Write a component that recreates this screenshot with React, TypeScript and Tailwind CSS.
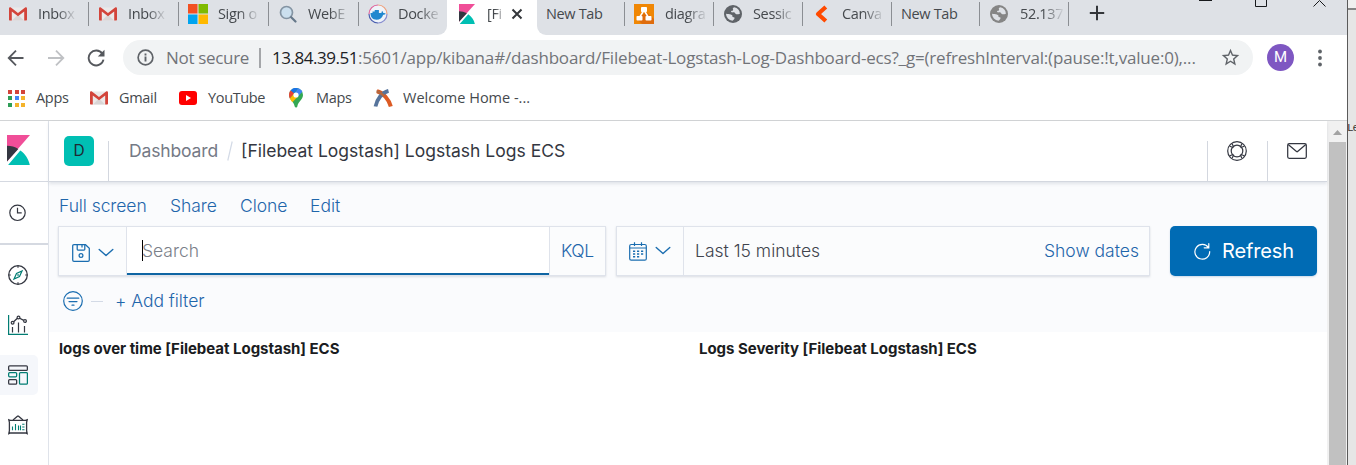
import React from "react";

type IconProps = { className?: string };

function GmailIcon({ className = "" }: IconProps) {
  return (
    <svg viewBox="0 0 18 14" className={`h-[14px] w-[18px] shrink-0 ${className}`}>
      <rect x="0.5" y="0.5" width="17" height="13" rx="1" fill="#ebe9e9" />
      <path d="M3 13.5 9 7.5l6 6z" fill="#d9d5d5" />
      <path d="M0 1.5C0 .5.8 0 1.6.2L9 6 16.4.2c.8-.2 1.6.3 1.6 1.3v11c0 .6-.4 1-1 1h-1.8V4.6L9 9.2 2.8 4.6v8.9H1c-.6 0-1-.4-1-1z" fill="#d3443a" />
    </svg>
  );
}

function MicrosoftIcon() {
  return (
    <svg viewBox="0 0 20 20" className="h-5 w-5 shrink-0">
      <path d="M0 0h9.5v9.5H0z" fill="#f25022" />
      <path d="M10.5 0H20v9.5h-9.5z" fill="#7fba00" />
      <path d="M0 10.5h9.5V20H0z" fill="#00a4ef" />
      <path d="M10.5 10.5H20V20h-9.5z" fill="#ffb900" />
    </svg>
  );
}

function SearchTabIcon() {
  return (
    <svg viewBox="0 0 18 18" className="h-[18px] w-[18px] shrink-0" fill="none">
      <circle cx="7.5" cy="7.500" r="6" fill="#cbdfee" stroke="#8494a3" strokeWidth="1.7" />
      <path d="m12.200 12.200 4.300 4.300" stroke="#66788a" strokeWidth="2.2" strokeLinecap="round" />
    </svg>
  );
}

function DockerIcon() {
  return (
    <svg viewBox="0 0 20 20" className="h-5 w-5 shrink-0" fill="none">
      <circle cx="10" cy="10" r="9" fill="#eef3f9" />
      <path d="M1 10a9 9 0 0 1 9-9" stroke="#e0609a" strokeWidth="1.2" />
      <path d="M10 1a9 9 0 0 1 9 9" stroke="#efa27e" strokeWidth="1.2" />
      <path d="M19 10a9 9 0 0 1-9 9" stroke="#8a8fd0" strokeWidth="1.2" />
      <path d="M10 19a9 9 0 0 1-9-9" stroke="#4a5fb0" strokeWidth="1.2" />
      <path d="M2.500 9h2V7.500h2.200V6h4.200v3h1.800c1 0 1.300-.8 1.100-2 1 .4 1.500 1.200 1.400 2 1-.2 2 0 2.500.4-.5 1-1.500 1.300-2.500 1.300-1.200 3.200-3.400 5-6.700 5C4.500 15.700 2.500 13 2.500 9z" fill="#2088cf" />
    </svg>
  );
}

function KibanaIcon({ className = "" }: IconProps) {
  return (
    <svg viewBox="0 0 23 30" preserveAspectRatio="none" className={`shrink-0 ${className}`}>
      <path d="M0 0h23L0 26.500z" fill="#f04e98" />
      <path d="M0 10.800c4.100 0 8 1.100 11.300 3.100L0 26.500z" fill="#343741" />
      <path d="M13.300 15.500 1.100 30H22.800c-1.200-6-4.600-11.100-9.500-14.500z" fill="#00bfb3" />
    </svg>
  );
}

function DiagramsIcon() {
  return (
    <svg viewBox="0 0 20 20" className="h-5 w-5 shrink-0">
      <rect width="20" height="20" fill="#f08705" />
      <path d="M12 8 20 15v5H8l-5-5z" fill="#df6c0c" />
      <path d="M9.500 7 5.800 13M10.500 7l3.700 6" stroke="#fff" strokeWidth="1.500" />
      <rect x="7" y="3" width="6" height="5" rx="0.800" fill="#fff" />
      <rect x="2.500" y="12" width="6" height="4.500" rx="0.800" fill="#fff" />
      <rect x="11.500" y="12" width="6" height="4.500" rx="0.800" fill="#fff" />
    </svg>
  );
}

function GlobeIcon({ className = "" }: IconProps) {
  return (
    <svg viewBox="0 0 18 18" className={`h-[18px] w-[18px] shrink-0 ${className}`}>
      <circle cx="9" cy="9" r="9" fill="currentColor" />
      <path d="M10.200 2.200c-1.400.4-1.700 1.300-1.200 2.100.5.800-.2 1.500-1.200 1.500-1 .1-.9 1.300-.2 1.500 1.100.3 3-.4 3.600.9.500 1.300 2.200 1.300 4.700.5a7 7 0 0 0-5.700-6.500z" fill="#dee1e6" />
      <path d="M2 8.800c1.800.3 3.300.2 4.900.8 1.300.5 1.800 1 1.500 2.200.4.700 1.800.2 2.100 1 .3 1-.8 1.900-2 3A7 7 0 0 1 2 8.800z" fill="#dee1e6" />
    </svg>
  );
}

function ChevronTabIcon() {
  return (
    <svg viewBox="0 0 13 18" className="h-[18px] w-[13px] shrink-0" fill="none">
      <path d="M10.800 2 3 9l7.800 7" stroke="#ff4a00" strokeWidth="4.200" strokeLinejoin="round" />
    </svg>
  );
}

function FadedTitle({ children, width }: { children: string; width: string }) {
  return (
    <span className={`overflow-hidden whitespace-nowrap [mask-image:linear-gradient(to_right,#000_50%,transparent_100%)] ${width}`}>
      {children}
    </span>
  );
}

const divider = "border-r border-[#8b8e93] h-[24px]";

function TabStrip() {
  return (
    <div className="flex h-[35px] bg-white text-[14.500px] tracking-[-0.350px] text-[#45494d]">
      <div className="flex w-[447px] rounded-br-[9px] bg-[#dee1e6] pt-[2px]">
        <div className={`flex w-[89px] items-center gap-[11px] pl-[9px] ${divider}`}><GmailIcon /><FadedTitle width="w-[39px]">Inbox</FadedTitle></div>
        <div className={`flex w-[90px] items-center gap-[11px] pl-[10px] ${divider}`}><GmailIcon /><FadedTitle width="w-[39px]">Inbox</FadedTitle></div>
        <div className={`flex w-[90px] items-center gap-[10px] pl-[9px] ${divider}`}><MicrosoftIcon /><FadedTitle width="w-[42px]">Sign o</FadedTitle></div>
        <div className={`flex w-[90px] items-center gap-[11px] pl-[10px] ${divider}`}><SearchTabIcon /><FadedTitle width="w-[43px]">WebE</FadedTitle></div>
        <div className="flex h-[24px] w-[88px] items-center gap-[10px] pl-[9px]"><DockerIcon /><FadedTitle width="w-[44px]">Docke</FadedTitle></div>
      </div>
      <div className="flex w-[90px] items-center pb-[7px] pl-[12px]">
        <KibanaIcon className="h-[20px] w-[16px]" />
        <span className="ml-[12px] w-[18px] whitespace-nowrap [mask-image:linear-gradient(to_right,#000_45%,transparent_100%)]">[Fi</span>
        <svg viewBox="0 0 12 12" className="ml-[6px] h-[12px] w-[12px]"><path d="m1.500 1.500 9 9m0-9-9 9" stroke="#33363a" strokeWidth="2" /></svg>
      </div>
      <div className="flex flex-1 rounded-bl-[9px] bg-[#dee1e6] pt-[2px]">
        <div className={`flex w-[88px] items-center pl-[9px] ${divider}`}>New Tab</div>
        <div className={`flex w-[89px] items-center gap-[11px] pl-[9px] ${divider}`}><DiagramsIcon /><FadedTitle width="w-[43px]">diagra</FadedTitle></div>
        <div className={`flex w-[89px] items-center gap-[11px] pl-[10px] ${divider}`}><GlobeIcon className="text-[#5f6368]" /><FadedTitle width="w-[43px]">Sessic</FadedTitle></div>
        <div className={`flex w-[89px] items-center gap-[14px] pl-[12px] ${divider}`}><ChevronTabIcon /><FadedTitle width="w-[43px]">Canva</FadedTitle></div>
        <div className={`flex w-[88px] items-center pl-[9px] ${divider}`}>New Tab</div>
        <div className={`flex w-[89px] items-center gap-[12px] pl-[10px] ${divider}`}><GlobeIcon className="text-[#858585]" /><FadedTitle width="w-[45px]">52.137</FadedTitle></div>
        <svg viewBox="0 0 16 16" className="mt-[3px] ml-[20px] h-[16px] w-[16px]"><path d="M8 .8v14.400M.8 8h14.400" stroke="#33363a" strokeWidth="2" /></svg>
        <svg viewBox="0 0 130 10" className="-mt-[2px] ml-[93px] h-[10px] w-[130px]" fill="none" stroke="#17191c">
          <path d="M1 0h13" strokeWidth="2" />
          <path d="M57.500-4v10.500h11V-4" />
          <path d="m115.500 6.500 6-6 6 6" />
        </svg>
      </div>
    </div>
  );
}

function AddressBar() {
  return (
    <div className="flex h-[45px] items-center">
      <div className="flex w-[123px] items-center pl-[7px]">
        <svg viewBox="0 0 18 18" className="h-[18px] w-[18px]" fill="none" stroke="#55585d" strokeWidth="1.800"><path d="M16.500 9H2m7-7.300L1.700 9 9 16.300" /></svg>
        <svg viewBox="0 0 18 18" className="ml-[22px] h-[18px] w-[18px]" fill="none" stroke="#bfc1c4" strokeWidth="1.800"><path d="M1 9h15M9 1.700 16.300 9 9 16.300" /></svg>
        <svg viewBox="0 0 18 18" className="ml-[22px] h-[18px] w-[18px]" fill="none"><path d="M15.300 4.600a7.500 7.500 0 1 0 1.200 6" stroke="#55585d" strokeWidth="1.900" /><path d="M17.500.8v6.700h-6.700z" fill="#55585d" /></svg>
      </div>
      <div className="flex h-[35px] w-[1130px] items-center rounded-full bg-[#f1f3f4] pl-[14px] text-[17px] text-[#717479]">
        <svg viewBox="0 0 18 18" className="h-[17px] w-[17px]" fill="none"><circle cx="9" cy="9" r="7.800" stroke="#5f6368" strokeWidth="1.800" /><path d="M8 8h2v5.200H8zM8 4.800h2v2H8z" fill="#5f6368" /></svg>
        <span className="ml-[12px] w-[93px] tracking-[-0.320px]">Not secure</span>
        <span className="h-[20px] w-[2px] bg-[#a4a6a9]" />
        <span className="ml-[11px] w-[946px] whitespace-nowrap tracking-[-0.180px]"><span className="tracking-[-0.470px] text-[#202124]">13.84.39.51</span>:5601/app/kibana#/dashboard/Filebeat-Logstash-Log-Dashboard-ecs?_g=(refreshInterval:(pause:!t,value:0),...</span>
        <svg viewBox="0 0 24 24" className="ml-[2px] h-[21px] w-[21px]" fill="#5f6368"><path d="m22 9.240-7.190-.62L12 2 9.190 8.630 2 9.240l5.460 4.730L5.820 21 12 17.270 18.180 21l-1.630-7.030L22 9.240zM12 15.400l-3.760 2.270 1-4.280-3.320-2.880 4.380-.38L12 6.100l1.710 4.040 4.380.38-3.320 2.880 1 4.280L12 15.400z" /></svg>
      </div>
      <span className="ml-[14px] flex h-[27px] w-[27px] items-center justify-center rounded-full bg-[#7e57c2] font-['Roboto',sans-serif] text-[15px] text-white">M</span>
      <svg viewBox="0 0 4 18" className="ml-[24px] h-[18px] w-[4px]" fill="#5f6368"><circle cx="2" cy="2.500" r="1.900" /><circle cx="2" cy="9" r="1.900" /><circle cx="2" cy="15.500" r="1.900" /></svg>
    </div>
  );
}

const appColors = ["bg-[#d3443a]", "bg-[#d3443a]", "bg-[#d3443a]", "bg-[#2f9e57]", "bg-[#4285f4]", "bg-[#f4b32b]", "bg-[#2f9e57]", "bg-[#f4b32b]", "bg-[#f4b32b]"];

function AppsIcon() {
  return (
    <span className="grid w-[17px] grid-cols-3 gap-[2.500px]">
      {appColors.map((color, i) => <i key={i} className={`h-[4px] ${color}`} />)}
    </span>
  );
}

function Bookmarks() {
  return (
    <div className="flex h-[41px] items-center border-b border-[#d2d4d6] pb-[4px] pl-[8px] text-[14.500px] text-[#45494d]">
      <AppsIcon /><span className="ml-[11px] w-[54px] tracking-[-0.300px]">Apps</span>
      <GmailIcon /><span className="ml-[11px] w-[60px] tracking-[-0.300px]">Gmail</span>
      <svg viewBox="0 0 18 14" className="h-[14px] w-[18px]"><rect width="18" height="14" rx="3" fill="#f00" /><path d="M7 4v6l5-3z" fill="#fff" /></svg>
      <span className="ml-[11px] w-[81px] tracking-[-0.350px]">YouTube</span>
      <svg viewBox="0 0 14 20" className="h-[20px] w-[14px]">
        <path d="M7 0a7 7 0 0 1 7 7c0 4.500-4.700 6-5.700 11.500-.3 1.400-2.300 1.400-2.600 0C4.700 13 0 11.500 0 7a7 7 0 0 1 7-7z" fill="#34a853" />
        <path d="M1.600 2.500A7 7 0 0 1 9.200.3L4.500 5.800z" fill="#1a73e8" />
        <path d="M1.600 2.500 5.200 5.500.8 10.500C-.3 8-.4 5 1.600 2.500z" fill="#ea4335" />
        <path d="M9.200.3c2 .6 3.300 1.900 4.100 3.500L9 8.500 5.200 5.500z" fill="#4285f4" />
        <path d="M.8 10.500 5.200 5.500 9 8.500 3.300 14.200z" fill="#fbbc04" />
        <circle cx="7" cy="7" r="2.600" fill="#fff" />
      </svg>
      <span className="ml-[13px] w-[57px] tracking-[-0.300px]">Maps</span>
      <svg viewBox="0 0 20 18" className="h-[18px] w-[20px]" fill="none" strokeLinecap="butt">
        <path d="M17.800 17.500C16 10.500 10 3.500 4 2.200" stroke="#dc5b24" strokeWidth="4" />
        <path d="M2.500 17.500C4 10 9 3.500 15.500 1.800" stroke="#56749c" strokeWidth="3.800" />
        <path d="M3.500 2.300c3 .6 5.500 2.500 7.500 4.500" stroke="#b4683f" strokeWidth="2.500" />
      </svg>
      <span className="ml-[10px] tracking-[0px]">Welcome Home -...</span>
    </div>
  );
}

const ink = "#343741";
const teal = "#017d73";

function Sidebar() {
  return (
    <nav className="flex w-[49px] shrink-0 flex-col border-r border-[#dfe3ea] bg-white">
      <div className="h-[60px] pt-[14px] pl-[7px]"><KibanaIcon className="h-[30px] w-[23px]" /></div>
      <div className="flex h-[64px] items-center border-t border-b-2 border-[#d5d9e1] pl-[9px]">
        <svg viewBox="0 0 18 18" className="h-[18px] w-[18px]" fill="none" stroke={ink} strokeWidth="1.200"><circle cx="8.500" cy="8.800" r="7.700" /><path d="M8.500 3.800v5h4.200" /></svg>
      </div>
      <div className="mt-[10px] flex h-[40px] items-center pl-[8px]">
        <svg viewBox="0 0 20 20" className="h-[20px] w-[20px]" fill="none">
          <circle cx="10" cy="10" r="9.300" stroke={ink} strokeWidth="1.300" />
          <path d="M10 .8v2M10 17.200v2M.8 10h2M17.200 10h2" stroke={ink} strokeWidth="1.200" />
          <path d="m14 6-2.500 5.500L6 14l2.500-5.500z" stroke={teal} strokeWidth="1.200" /><path d="M9.300 9.300h1.500v1.500H9.300z" fill={teal} />
        </svg>
      </div>
      <div className="mt-[10px] flex h-[40px] items-center pl-[8px]">
        <svg viewBox="0 0 20 20" className="h-[20px] w-[20px]" fill="none">
          <path d="M.6 0v19.400H20" stroke={teal} strokeWidth="1.200" />
          <path d="M4.500 12v5.500M10.500 7.500v10M16.500 11v6.500" stroke={ink} strokeWidth="1.200" />
          <path d="m5.600 6.800 3.800-3.500M11.700 3.200l4 2.200" stroke={ink} strokeWidth="1.300" />
          <circle cx="4.600" cy="7.700" r="1.400" stroke={ink} strokeWidth="1.200" /><circle cx="10.500" cy="2.500" r="1.400" stroke={ink} strokeWidth="1.200" /><circle cx="17" cy="6" r="1.400" stroke={ink} strokeWidth="1.200" />
        </svg>
      </div>
      <div className="mt-[10px] flex h-[40px] w-[38px] items-center rounded-r-[5px] bg-[#f5f7fb] pl-[8px]">
        <svg viewBox="0 0 20 20" className="h-[20px] w-[20px]" fill="none" strokeWidth="1.250">
          <rect x="0.650" y="0.800" width="18.700" height="4.600" rx="1" stroke={ink} />
          <rect x="0.650" y="7.600" width="8" height="4.200" rx="1" stroke={teal} />
          <rect x="0.650" y="14.500" width="8" height="4.700" rx="1" stroke={ink} />
          <rect x="11.500" y="7.600" width="7.900" height="11.600" rx="1" stroke={teal} />
        </svg>
      </div>
      <div className="mt-[10px] flex h-[40px] items-center pl-[8px]">
        <svg viewBox="0 0 20 20" className="h-[20px] w-[20px]" fill="none">
          <path d="m5 5 4.500-3.800h1L15 5" stroke={ink} strokeWidth="1.200" />
          <path d="M.8 4.800 2.500 5.400h15l1.700-.6-.6 2.500v8.400l.6 3-1.700-.7h-15l-1.700.7.6-3V7.300z" stroke={ink} strokeWidth="1.300" />
          <path d="M4.500 11.500v3.700M7.500 9v6.200M10.500 10.500v4.700M12.500 10.500v4.700" stroke={teal} strokeWidth="1.100" />
          <path d="M14.200 9.200h2.300M14.200 12h2.300M14.200 14.700h2.300" stroke={teal} strokeWidth="1.100" />
        </svg>
      </div>
    </nav>
  );
}

function ChevronDown() {
  return <svg viewBox="0 0 16 10" className="ml-[8px] h-[10px] w-[16px]" fill="none" stroke="#1a6db0" strokeWidth="1.400"><path d="m1.200 1.500 6.800 6 6.800-6" strokeLinecap="round" strokeLinejoin="round" /></svg>;
}

function Header() {
  return (
    <header className="z-10 flex h-[61px] shrink-0 items-center border-b border-[#d3d7df] bg-white shadow-[0_2px_3px_rgba(90,100,120,0.150)]">
      <div className="flex h-[40px] w-[60px] self-end border-r border-[#d3d7df] pl-[15px]">
        <span className="-mt-[5px] flex h-[30px] w-[30px] items-center justify-center rounded-[5px] bg-[#00bfb3] text-[15.500px] text-[#1f2a33]">D</span>
      </div>
      <span className="ml-[20px] tracking-[-0.140px] text-[#757a86]">Dashboard</span>
      <svg viewBox="0 0 6 20" className="ml-[9px] h-[20px] w-[6px]"><path d="M5.200.5.800 19.500" stroke="#d3dae6" strokeWidth="1.200" /></svg>
      <span className="ml-[8px] text-[#343741]">[Filebeat Logstash] Logstash Logs ECS</span>
      <div className="ml-auto flex h-[40px] w-[60px] self-end border-l border-[#d3d7df] pl-[19px]">
        <svg viewBox="0 0 20 20" className="h-[20px] w-[20px]" fill="none" stroke={ink} strokeWidth="1.200">
          <circle cx="10" cy="10" r="9.300" /><circle cx="10" cy="10" r="5.800" />
          <path d="m3 5.200 3.300 1.600M5.200 3l1.600 3.300M14.800 3l-1.600 3.300M17 5.200l-3.300 1.600M3 14.800l3.300-1.600M5.200 17l1.600-3.300M14.800 17l-1.600-3.300M17 14.800l-3.300-1.600" />
        </svg>
      </div>
      <div className="flex h-[40px] w-[60px] self-end border-l border-[#d3d7df] pt-[2px] pl-[19px]">
        <svg viewBox="0 0 20 16" className="h-[16px] w-[20px]" fill="none" stroke={ink} strokeWidth="1.250"><rect x="0.700" y="0.700" width="18.600" height="14.600" rx="1.500" /><path d="m1.200 1.500 8.300 7c.4.3.8.3 1.100 0l8.200-7" /></svg>
      </div>
    </header>
  );
}

function QueryBar() {
  return (
    <section className="h-[150px] shrink-0 bg-[#fafbfd] font-[350] text-[#1f66ab]">
      <div className="flex h-[44px] items-center pt-[4px] pl-[10px]">
        <span className="w-[111px] tracking-[-0.080px]">Full screen</span>
        <span className="w-[70px] tracking-[-0.080px]">Share</span>
        <span className="w-[70px] tracking-[-0.080px]">Clone</span>
        <span>Edit</span>
      </div>
      <div className="flex h-[50px] pl-[9px]">
        <div className="flex w-[548px] border border-[#dfe3eb] bg-[#fbfcfd] shadow-[0_1px_2px_rgba(90,100,120,0.200)]">
          <div className="flex w-[68px] items-center border-r border-[#dfe3eb] pt-[3px] pl-[13px]">
            <svg viewBox="0 0 18 18" className="h-[18px] w-[18px]" fill="none" stroke="#1a6db0" strokeWidth="1.250">
              <path d="M2 .7h11.500l3.800 3.500V16c0 .8-.5 1.300-1.300 1.300H2c-.8 0-1.300-.5-1.300-1.300V2C.7 1.200 1.200.7 2 .7z" />
              <path d="M5.200.7v4.600c0 .5.3.8.8.8h6c.5 0 .8-.3.8-.8V.7M10 .7V3.500" /><circle cx="9" cy="11.500" r="1.900" />
            </svg>
            <ChevronDown />
          </div>
          <div className="flex flex-1 items-center border-b-2 border-[#0f65a3] bg-white pl-[15px]">
            <span className="h-[21px] w-px bg-black" /><span className="-ml-[1px] pt-[3px] text-[#7b8089]">Search</span>
          </div>
          <div className="flex w-[56px] items-center border-l border-[#dfe3eb] pl-[11px] tracking-[-0.400px]">KQL</div>
        </div>
        <div className="ml-[10px] flex w-[534px] items-center border border-[#dfe3eb] bg-[#fbfcfd] shadow-[0_1px_2px_rgba(90,100,120,0.200)]">
          <div className="flex h-full w-[67px] items-center border-r border-[#dfe3eb] pl-[12px]">
            <svg viewBox="0 0 18 19" className="h-[19px] w-[18px]" fill="none" stroke="#1a6db0" strokeWidth="1.200">
              <rect x="0.700" y="2.500" width="16.600" height="15.700" rx="1.500" /><path d="M.7 6h16.600M5.500.3v3.700M12.500.3v3.700" />
              <path d="M4 9.200h10.500M4 12h10.500M4 14.800h7" strokeWidth="1.500" strokeDasharray="2.200 1.800" />
            </svg>
            <ChevronDown />
          </div>
          <span className="ml-[11px] text-[#41444d]">Last 15 minutes</span>
          <span className="mr-[10px] ml-auto">Show dates</span>
        </div>
        <button className="ml-[20px] flex w-[147px] items-center rounded-[5px] bg-[#006bb4] pl-[23px] text-[20px] font-normal text-white shadow-[0_1px_2px_rgba(0,80,150,0.200)]">
          <svg viewBox="0 0 18 18" className="mr-[11px] h-[18px] w-[18px]" fill="none" stroke="#fff" strokeWidth="1.200"><path d="M15.800 1.500v4.300h-4.600M15.500 5.700A7.400 7.400 0 1 0 16.700 9.500" strokeLinecap="round" /></svg>
          <span className="tracking-[-0.150px]">Refresh</span>
        </button>
      </div>
      <div className="flex h-[50px] items-center pl-[14px]">
        <svg viewBox="0 0 20 20" className="h-[20px] w-[20px]" fill="none" stroke="#1a6db0" strokeWidth="1.200"><circle cx="10" cy="10" r="9.300" /><path d="M4.200 7.200h11.600M6 10.600h8M9 14.200h2" strokeLinecap="round" /></svg>
        <span className="ml-[8px] h-px w-[12px] bg-[#d3dae6]" />
        <span className="ml-[12px] tracking-[-0.050px]">+ Add filter</span>
      </div>
    </section>
  );
}

export default function App() {
  return (
    <div className="flex h-[465px] w-[1356px] overflow-hidden bg-white font-['Open_Sans',sans-serif]">
      <div className="flex w-[1347px] flex-col">
        <TabStrip />
        <AddressBar />
        <Bookmarks />
        <div className="flex min-h-0 flex-1 font-['Inter',sans-serif] text-[17.500px]">
          <Sidebar />
          <main className="flex w-[1278px] flex-col">
            <Header />
            <QueryBar />
            <div className="flex pt-[6px] pl-[10px] text-[15px] leading-[22px] font-bold tracking-[-0.030px] text-[#1a1c21]">
              <h2 className="w-[640px]">logs over time [Filebeat Logstash] ECS</h2>
              <h2>Logs Severity [Filebeat Logstash] ECS</h2>
            </div>
          </main>
          <div className="flex flex-1 flex-col bg-[#f1f1f1] px-[2px] pr-[1px]">
            <svg viewBox="0 0 17 21" className="h-[21px] w-[17px] shrink-0"><path d="m4 14 4.500-5 4.500 5z" fill="#a3a3a3" /></svg>
            <div className="flex-1 bg-[#c1c1c1]" />
          </div>
        </div>
      </div>
      <div className="flex-1 overflow-hidden border-l border-[#5a5a5a] bg-[#e6e6e6]">
        <div className="h-[10px] border-b-2 border-[#858585] bg-[#f0f0f0]" />
        <div className="mt-[110px] -ml-[1px] font-['Liberation_Mono',monospace] text-[11px] leading-[16px] tracking-[-1px] text-[#333]">Le</div>
      </div>
    </div>
  );
}
